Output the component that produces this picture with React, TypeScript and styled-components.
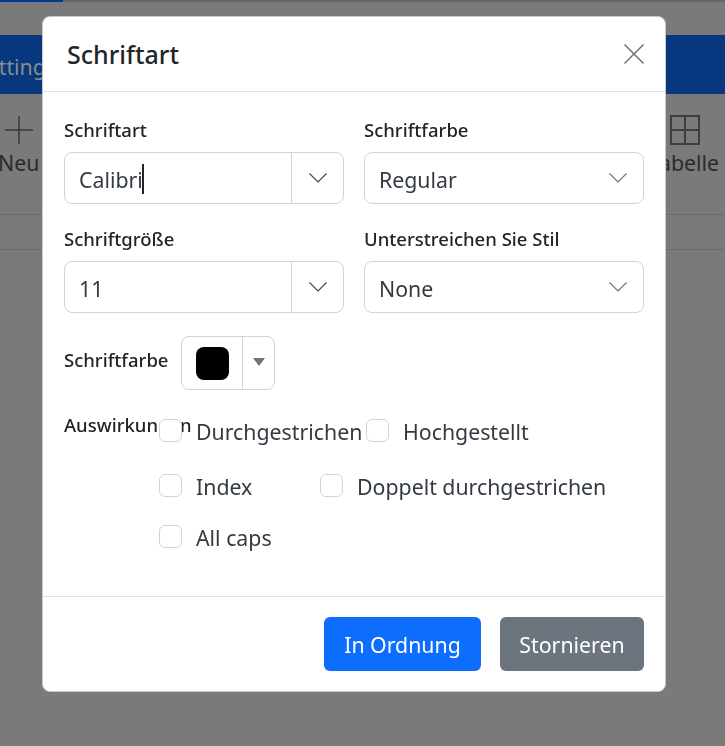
import styled, { createGlobalStyle } from 'styled-components';

const GlobalStyle = createGlobalStyle`
  html, body {
    margin: 0;
    height: 100%;
    overflow: hidden;
    background: #7a7a7a;
    font-family: "Noto Sans", "Open Sans", sans-serif;
    color: #212529;
  }
`;

const Page = styled.div`
  width: 725px;
  height: 746px;
  overflow: hidden;
  background: #7a7a7a;
`;

const TopStrip = styled.div`
  height: 2px;
  margin-bottom: 33px;
  background: #666;
`;

const TopTab = styled.div`
  width: 63px;
  height: 2px;
  background: #033a8f;
`;

const Banner = styled.div`
  height: 59px;
  background: #06377f;
  color: #8c8c8c;
  font-size: 21.3px;
  line-height: 63px;
  text-indent: -25px;
  white-space: nowrap;
`;

const Toolbar = styled.div`
  height: 121px;
  box-sizing: border-box;
  display: flex;
  justify-content: space-between;
  border-bottom: 1px solid #6b6b6b;
  color: #2b2b2b;
  font-size: 21.3px;
`;

const ToolItem = styled.div<{ $right?: boolean }>`
  display: flex;
  flex-direction: column;
  align-items: ${(p) => (p.$right ? 'flex-end' : 'center')};
  padding-top: ${(p) => (p.$right ? '21px' : '22px')};
  margin-left: ${(p) => (p.$right ? '0' : '-2px')};
  margin-right: ${(p) => (p.$right ? '6px' : '0')};
  gap: ${(p) => (p.$right ? '3px' : '4px')};
`;

const TableIcon = styled.svg`
  margin-right: 19px;
`;

const SubBar = styled.div`
  height: 35px;
  box-sizing: border-box;
  border-bottom: 1px solid #6b6b6b;
`;

const Modal = styled.div`
  position: fixed;
  left: 42px;
  top: 16px;
  width: 624px;
  height: 676px;
  box-sizing: border-box;
  display: flex;
  flex-direction: column;
  background: #fff;
  border: 1px solid #c9c9c9;
  border-radius: 8px;
`;

const Header = styled.div`
  height: 75px;
  box-sizing: border-box;
  flex: none;
  display: flex;
  align-items: center;
  justify-content: space-between;
  padding: 0 20px 0 24px;
  border-bottom: 1px solid #dee2e6;
`;

const Title = styled.h5`
  margin: 0;
  font-size: 25px;
  font-weight: 500;
`;

const CloseButton = styled.button`
  display: flex;
  width: 22px;
  height: 22px;
  padding: 0;
  border: 0;
  background: none;
  color: #6b7178;
`;

const Body = styled.div`
  flex: 1;
  padding: 27px 21px 0;
`;

const FieldGrid = styled.div`
  display: grid;
  grid-template-columns: 280px 280px;
  column-gap: 20px;
  row-gap: 24px;
`;

const Field = styled.div`
  display: flex;
  flex-direction: column;
`;

const Label = styled.label`
  font-size: 18.5px;
  font-weight: 500;
  line-height: 22px;
  margin-bottom: 11px;
  white-space: nowrap;
`;

const Combo = styled.div`
  height: 52px;
  box-sizing: border-box;
  display: flex;
  align-items: center;
  border: 1px solid #ced4da;
  border-radius: 8px;
  font-size: 21.3px;
  color: #333a41;
`;

const ComboValue = styled.div`
  flex: 1;
  padding-left: 14px;
  padding-top: 2px;
  display: flex;
  align-items: center;
`;

const Caret = styled.span`
  width: 2px;
  height: 30px;
  margin-left: -1px;
  background: #212529;
`;

const ComboToggle = styled.div<{ $divided?: boolean }>`
  width: ${(p) => (p.$divided ? '52px' : '50px')};
  height: 100%;
  box-sizing: border-box;
  display: flex;
  align-items: center;
  justify-content: center;
  border-left: ${(p) => (p.$divided ? '1px solid #ced4da' : '0')};
  color: ${(p) => (p.$divided ? '#3c4349' : '#6b7178')};
`;

const ColorRow = styled.div`
  display: flex;
  align-items: center;
  gap: 12px;
  margin-top: 23px;
`;

const InlineLabel = styled.span`
  width: 105px;
  padding-bottom: 8px;
  font-size: 18.5px;
  font-weight: 500;
  white-space: nowrap;
`;

const ColorPicker = styled.div`
  width: 94px;
  height: 54px;
  box-sizing: border-box;
  display: flex;
  border: 1px solid #ced4da;
  border-radius: 8px;
`;

const SwatchWrap = styled.div`
  width: 60px;
  display: flex;
  align-items: center;
  justify-content: center;
  border-right: 1px solid #ced4da;
`;

const Swatch = styled.div`
  width: 33px;
  height: 33px;
  border-radius: 8px;
  background: #000;
`;

const DropArrow = styled.div`
  flex: 1;
  display: flex;
  align-items: center;
  justify-content: center;
  padding-bottom: 2px;
`;

const Triangle = styled.span`
  width: 0;
  height: 0;
  border-left: 6.5px solid transparent;
  border-right: 6.5px solid transparent;
  border-top: 8px solid #6c757d;
`;

const Effects = styled.div`
  display: flex;
  margin-top: 24px;
`;

const EffectsLabel = styled.span`
  flex: none;
  width: 95px;
  font-size: 18.5px;
  font-weight: 500;
  line-height: 22px;
  white-space: nowrap;
`;

const EffectsRows = styled.div`
  display: flex;
  flex-direction: column;
  padding-top: 5px;
`;

const EffectsRow = styled.div<{ $height: number }>`
  display: flex;
  height: ${(p) => p.$height}px;
`;

const Check = styled.label<{ $width?: number }>`
  display: flex;
  align-items: flex-start;
  gap: 14px;
  width: ${(p) => (p.$width ? `${p.$width}px` : 'auto')};
  font-size: 21.3px;
  line-height: 26px;
  color: #333a41;
  white-space: nowrap;
`;

const Box = styled.span`
  position: relative;
  flex: none;
  width: 21px;
  height: 21px;
  background: #fff;
  border: 1px solid #ced4da;
  border-radius: 6px;
`;

const Footer = styled.div`
  height: 95px;
  box-sizing: border-box;
  flex: none;
  display: flex;
  justify-content: flex-end;
  gap: 19px;
  padding: 20px 21px 0;
  border-top: 1px solid #dee2e6;
`;

const Button = styled.button<{ $primary?: boolean }>`
  width: ${(p) => (p.$primary ? '157px' : '144px')};
  height: 54px;
  padding: 0;
  border: 0;
  border-radius: 6px;
  background: ${(p) => (p.$primary ? '#0d6efd' : '#6c757d')};
  color: #fff;
  font-family: inherit;
  font-size: 21.3px;
`;

const Chevron = () => (
  <svg width="18" height="10" viewBox="0 0 18 10" fill="none" stroke="currentColor" strokeWidth="1.1">
    <path d="M0.5 0.5 9 9 17.5 0.5" />
  </svg>
);

const App = () => (
  <Page>
    <GlobalStyle />
    <TopStrip>
      <TopTab />
    </TopStrip>
    <Banner>Settings</Banner>
    <Toolbar>
      <ToolItem>
        <svg width="28" height="28" viewBox="0 0 28 28" stroke="#3a3a3a" strokeWidth="1.5">
          <path d="M14 0V28M0 14H28" />
        </svg>
        <span>Neu</span>
      </ToolItem>
      <ToolItem $right>
        <TableIcon width="30" height="30" viewBox="0 0 30 30" fill="none" stroke="#3a3f44" strokeWidth="2">
          <path d="M1 1H29V29H1ZM15 1V29M1 15H29" />
        </TableIcon>
        <span>Tabelle</span>
      </ToolItem>
    </Toolbar>
    <SubBar />
    <Modal>
      <Header>
        <Title>Schriftart</Title>
        <CloseButton aria-label="Schließen">
          <svg width="22" height="22" viewBox="0 0 22 22" stroke="currentColor" strokeWidth="1.5">
            <path d="M1.5 1.5 20.5 20.5M20.5 1.5 1.5 20.5" />
          </svg>
        </CloseButton>
      </Header>
      <Body>
        <FieldGrid>
          <Field>
            <Label>Schriftart</Label>
            <Combo>
              <ComboValue>
                Calibri
                <Caret />
              </ComboValue>
              <ComboToggle $divided>
                <Chevron />
              </ComboToggle>
            </Combo>
          </Field>
          <Field>
            <Label>Schriftfarbe</Label>
            <Combo>
              <ComboValue>Regular</ComboValue>
              <ComboToggle>
                <Chevron />
              </ComboToggle>
            </Combo>
          </Field>
          <Field>
            <Label>Schriftgröße</Label>
            <Combo>
              <ComboValue>11</ComboValue>
              <ComboToggle $divided>
                <Chevron />
              </ComboToggle>
            </Combo>
          </Field>
          <Field>
            <Label>Unterstreichen Sie Stil</Label>
            <Combo>
              <ComboValue>None</ComboValue>
              <ComboToggle>
                <Chevron />
              </ComboToggle>
            </Combo>
          </Field>
        </FieldGrid>
        <ColorRow>
          <InlineLabel>Schriftfarbe</InlineLabel>
          <ColorPicker>
            <SwatchWrap>
              <Swatch />
            </SwatchWrap>
            <DropArrow>
              <Triangle />
            </DropArrow>
          </ColorPicker>
        </ColorRow>
        <Effects>
          <EffectsLabel>Auswirkungen</EffectsLabel>
          <EffectsRows>
            <EffectsRow $height={55}>
              <Check $width={207}>
                <Box />
                Durchgestrichen
              </Check>
              <Check>
                <Box />
                Hochgestellt
              </Check>
            </EffectsRow>
            <EffectsRow $height={51}>
              <Check $width={161}>
                <Box />
                Index
              </Check>
              <Check>
                <Box />
                Doppelt durchgestrichen
              </Check>
            </EffectsRow>
            <EffectsRow $height={40}>
              <Check>
                <Box />
                All caps
              </Check>
            </EffectsRow>
          </EffectsRows>
        </Effects>
      </Body>
      <Footer>
        <Button $primary>In Ordnung</Button>
        <Button>Stornieren</Button>
      </Footer>
    </Modal>
  </Page>
);

export default App;
